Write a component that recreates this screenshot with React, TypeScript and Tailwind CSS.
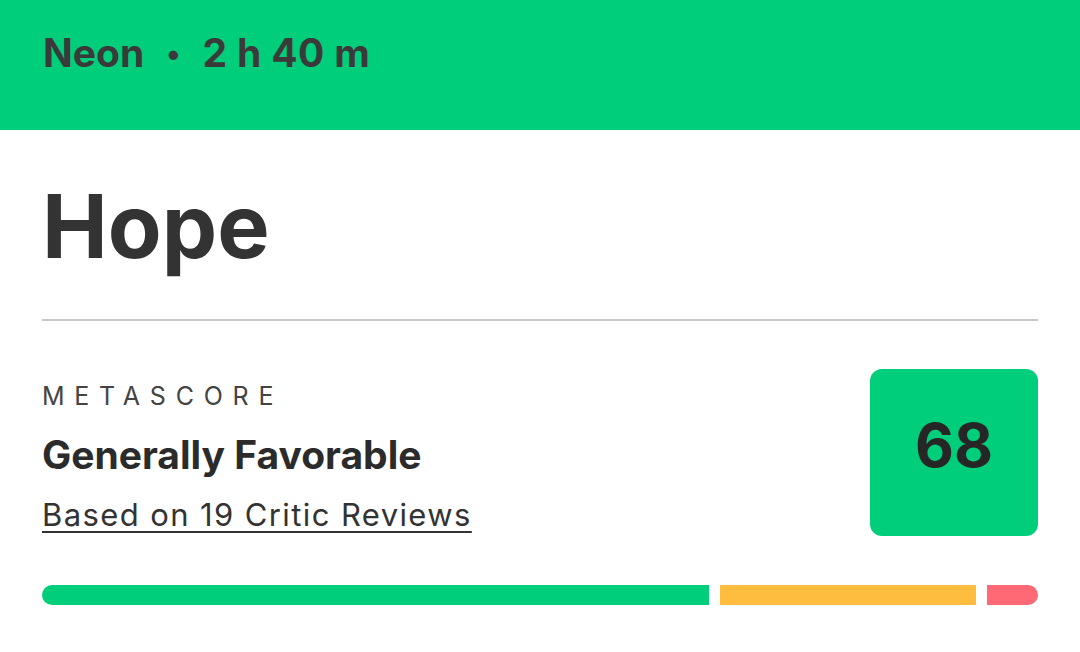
import React from "react";

const font = { fontFamily: "Inter, 'Noto Sans', sans-serif" };

function ScoreBar() {
  return (
    <div className="flex h-[20px] gap-[11px]">
      <div className="w-[667px] rounded-l-full bg-[#00ce7a]" />
      <div className="w-[256px] bg-[#ffbd3f]" />
      <div className="flex-1 rounded-r-full bg-[#ff6874]" />
    </div>
  );
}

export default function App() {
  return (
    <div className="w-[1080px] h-[652px] bg-white text-[#333333]" style={font}>
      {/* ヘッダー */}
      <div className="h-[130px] bg-[#00ce7a] px-[43px] pt-[30px]">
        <div className="flex items-center text-[39px] font-bold leading-[46px] text-[#3a3a3a]">
          <span>Neon</span>
          <span className="mx-[22px] text-[30px]">•</span>
          <span className="tracking-[0.01em]">2 h 40 m</span>
        </div>
      </div>

      <div className="px-[42px]">
        <h1 className="mt-[46px] text-[88px] font-bold leading-[100px] text-[#333333]">Hope</h1>
        <div className="mt-[43px] h-[2px] bg-[#c8c8c8]" />

        <div className="mt-[47px] flex items-start justify-between">
          <div className="pt-[13px]">
            <div className="text-[25px] leading-[30px] tracking-[0.39em] text-[#444444]">METASCORE</div>
            <div className="mt-[22px] text-[39px] font-bold leading-[44px] text-[#2b2b2b]">Generally Favorable</div>
            <a className="mt-[19px] block text-[31px] leading-[38px] tracking-[0.045em] text-[#333333] underline decoration-2 underline-offset-[5px]">
              Based on 19 Critic Reviews
            </a>
          </div>
          <div className="mt-[1px] flex h-[167px] w-[168px] items-center justify-center rounded-[12px] bg-[#00ce7a] pb-[16px]">
            <span className="text-[60px] font-bold leading-none text-[#262626]">68</span>
          </div>
        </div>

        <div className="mt-[49px]">
          <ScoreBar />
        </div>
      </div>
    </div>
  );
}
